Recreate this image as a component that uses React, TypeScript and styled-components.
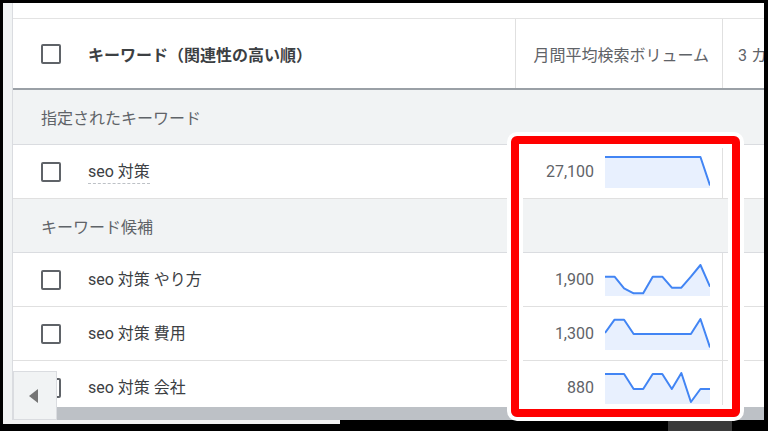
import React from "react";
import styled, { createGlobalStyle } from "styled-components";

const GlobalStyle = createGlobalStyle`
  html, body { margin: 0; padding: 0; background: #000; }
  body { font-family: Roboto, "Noto Sans CJK JP", sans-serif; }
`;

const Frame = styled.div`
  position: relative;
  width: 768px;
  height: 431px;
  box-sizing: border-box;
  padding: 3px 4px 0 3px;
  background: #000;
  display: flex;
  flex-direction: column;
  overflow: hidden;
`;

const Screen = styled.div`
  height: 417px;
  flex: none;
  display: flex;
  background: #fff;
`;

const SideStrip = styled.div`
  width: 9px;
  flex: none;
  background: #f1f3f4;
  border-right: 1px solid #dadce0;
`;

const Viewport = styled.div`
  position: relative;
  flex: 1;
  min-width: 0;
  display: flex;
  flex-direction: column;
`;

const TopStrip = styled.div`
  height: 15px;
  flex: none;
  border-bottom: 1px solid #e3e3e3;
`;

const TableArea = styled.div`
  flex: 1;
  overflow: hidden;
`;

const Grid = styled.div`
  display: grid;
  grid-template-columns: 502px 207px 1fr;
`;

const HeaderRow = styled(Grid)`
  height: 69px;
  border-bottom: 2px solid #9aa0a6;
`;

const HeaderCell = styled.div<{ $align?: "start" | "end"; $divider?: boolean }>`
  display: flex;
  align-items: center;
  justify-content: ${(p) => (p.$align === "end" ? "flex-end" : "flex-start")};
  padding: ${(p) => (p.$align === "end" ? "0 13px 0 0" : "0 0 0 15px")};
  border-left: ${(p) => (p.$divider ? "1px solid #e0e0e0" : "none")};
  font-size: 16px;
  color: #5f6368;
  white-space: nowrap;
  overflow: hidden;
`;

const KeywordHeadCell = styled.div`
  display: flex;
  align-items: center;
  gap: 27px;
  padding-left: 28px;
`;

const HeadTitle = styled.span`
  font-size: 16px;
  font-weight: 700;
  color: #3c4043;
  white-space: nowrap;
`;

const Checkbox = styled.span`
  display: block;
  width: 20px;
  height: 20px;
  box-sizing: border-box;
  border: 2px solid #5f6368;
  border-radius: 2px;
  flex: none;
`;

const SectionRow = styled.div<{ $tall?: boolean }>`
  height: ${(p) => (p.$tall ? 54 : 53)}px;
  display: flex;
  align-items: center;
  padding-left: 28px;
  background: #f1f3f4;
  border-bottom: 1px solid #dadce0;
  font-size: 16px;
  color: #5f6368;
`;

const DataRow = styled(Grid)`
  height: 53px;
  border-bottom: 1px solid #e0e0e0;
`;

const KeywordCell = styled.div`
  display: flex;
  align-items: center;
  gap: 27px;
  padding-left: 28px;
`;

const KeywordText = styled.span<{ $dashed?: boolean }>`
  font-size: 16px;
  color: #3c4043;
  white-space: nowrap;
  line-height: 20px;
  padding-bottom: ${(p) => (p.$dashed ? 1 : 0)}px;
  border-bottom: ${(p) => (p.$dashed ? "1px dashed #bdc1c6" : "none")};
  margin-top: ${(p) => (p.$dashed ? 2 : 0)}px;
`;

const VolumeCell = styled.div`
  display: flex;
  align-items: center;
  justify-content: flex-end;
  gap: 11px;
  padding-right: 12px;
`;

const Volume = styled.span`
  font-size: 16px;
  color: #5f6368;
`;

const TrendCell = styled.div`
  border-left: 1px solid #e0e0e0;
`;

const SparkSvg = styled.svg`
  display: block;
  flex: none;
`;

const HScrollbar = styled.div`
  height: 13px;
  flex: none;
  background: #bdc1c6;
`;

const ScrollButton = styled.div`
  position: absolute;
  left: 0;
  bottom: 0;
  width: 44px;
  height: 49px;
  box-sizing: border-box;
  background: #f1f3f4;
  border: 1px solid #dadce0;
  display: flex;
  align-items: center;
  justify-content: center;
`;

const LeftArrow = styled.span`
  width: 0;
  height: 0;
  border-top: 7px solid transparent;
  border-bottom: 7px solid transparent;
  border-right: 9px solid #757575;
  margin-left: -4px;
`;

const BottomBar = styled.div`
  flex: 1;
  display: flex;
  align-items: flex-start;
`;

const BottomStub = styled.div`
  width: 337px;
  height: 4px;
  background: #f1f1f1;
`;

const BottomSpacer = styled.div`
  flex: 1;
`;

const BottomThumb = styled.div`
  width: 64px;
  height: 10px;
  margin: 1px 32px 0 0;
  background: #3a3a3a;
`;

const Highlight = styled.div`
  position: absolute;
  left: 511px;
  top: 136px;
  width: 229px;
  height: 281px;
  box-sizing: border-box;
  border: 8px solid #ff0000;
  border-radius: 6px;
  box-shadow: 0 0 0 4px #ffffff, inset 0 0 0 4px #ffffff;
  pointer-events: none;
`;

const W = 105;
const H = 32;

function Sparkline({ values }: { values: number[] }) {
  const step = W / (values.length - 1);
  const pts = values.map((v, i) => [i * step, 1 + v] as const);
  const line = pts.map(([x, y], i) => `${i ? "L" : "M"}${x.toFixed(2)} ${y.toFixed(2)}`).join(" ");
  const area = `${line} L${W} ${H} L0 ${H} Z`;
  return (
    <SparkSvg width={W} height={H} viewBox={`0 0 ${W} ${H}`}>
      <path d={area} fill="#e8f0fe" />
      <path d={line} fill="none" stroke="#4285f4" strokeWidth={2} strokeLinejoin="round" />
    </SparkSvg>
  );
}

type Item = { keyword: string; volume: string; trend: number[]; dashed?: boolean };

const seed: Item = {
  keyword: "seo 対策",
  volume: "27,100",
  trend: [0, 0, 0, 0, 0, 0, 0, 0, 0, 0, 0, 28.5],
  dashed: true,
};

const candidates: Item[] = [
  {
    keyword: "seo 対策 やり方",
    volume: "1,900",
    trend: [11.7, 11.7, 23.3, 28.3, 28.3, 11.7, 11.7, 22.7, 22.7, 11.7, 0, 21.7],
  },
  {
    keyword: "seo 対策 費用",
    volume: "1,300",
    trend: [14, 0.7, 0.7, 15, 15, 15, 15, 15, 15, 15, 0, 28.5],
  },
  {
    keyword: "seo 対策 会社",
    volume: "880",
    trend: [1, 1, 1, 16, 16, 1, 1, 16, 0, 29, 16, 16],
  },
];

function KeywordRow({ item }: { item: Item }) {
  return (
    <DataRow>
      <KeywordCell>
        <Checkbox />
        <KeywordText $dashed={item.dashed}>{item.keyword}</KeywordText>
      </KeywordCell>
      <VolumeCell>
        <Volume>{item.volume}</Volume>
        <Sparkline values={item.trend} />
      </VolumeCell>
      <TrendCell />
    </DataRow>
  );
}

export default function App() {
  return (
    <>
      <GlobalStyle />
      <Frame>
        <Screen>
          <SideStrip />
          <Viewport>
            <TopStrip />
            <TableArea>
              <HeaderRow>
                <KeywordHeadCell>
                  <Checkbox />
                  <HeadTitle>キーワード（関連性の高い順）</HeadTitle>
                </KeywordHeadCell>
                <HeaderCell $align="end" $divider>
                  月間平均検索ボリューム
                </HeaderCell>
                <HeaderCell $divider>3 カ月の推移</HeaderCell>
              </HeaderRow>
              <SectionRow $tall>指定されたキーワード</SectionRow>
              <KeywordRow item={seed} />
              <SectionRow>キーワード候補</SectionRow>
              {candidates.map((c) => (
                <KeywordRow key={c.keyword} item={c} />
              ))}
            </TableArea>
            <HScrollbar />
            <ScrollButton>
              <LeftArrow />
            </ScrollButton>
          </Viewport>
        </Screen>
        <BottomBar>
          <BottomStub />
          <BottomSpacer />
          <BottomThumb />
        </BottomBar>
        <Highlight />
      </Frame>
    </>
  );
}
